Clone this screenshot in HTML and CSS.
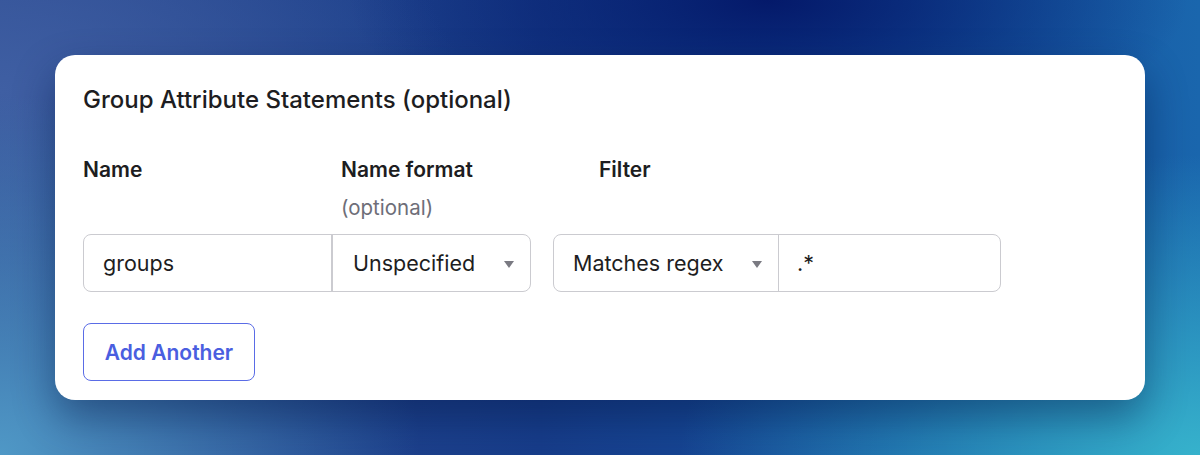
FILE: index.html
```html
<!DOCTYPE html>
<html>
<head>
	<title>Group Attribute Statements</title>
	<link rel="stylesheet" href="styles.css">
</head>
<body>
	<div class="stage">
		<div class="card">
			<h2 class="card-title">Group Attribute Statements (optional)</h2>

			<div class="labels">
				<div class="label label-name">Name</div>
				<div class="label label-format">
					Name format
					<span class="label-hint">(optional)</span>
				</div>
				<div class="label label-filter">Filter</div>
			</div>

			<div class="fields">
				<div class="field-group">
					<input type="text" class="text-input name-input" value="groups">
					<div class="select format-select">
						<span>Unspecified</span>
						<span class="caret"></span>
					</div>
				</div>
				<div class="field-group">
					<div class="select filter-select">
						<span>Matches regex</span>
						<span class="caret"></span>
					</div>
					<input type="text" class="text-input filter-input" value=".*">
				</div>
			</div>

			<button class="add-button">Add Another</button>
		</div>
	</div>
</body>
</html>
```

FILE: styles.css
```css
html, body {
	margin: 0;
	height: 100%;
}

body {
	font-family: Inter, "Noto Sans", sans-serif;
	overflow: hidden;
}

.stage {
	height: 455px;
	padding: 55px 55px 0 55px;
	box-sizing: border-box;
	background:
		radial-gradient(ellipse 420px 160px at 64% 0%, #04196a 0%, rgba(4, 25, 106, 0) 100%),
		radial-gradient(ellipse 520px 300px at 100% 100%, #36b2cc 0%, rgba(54, 178, 204, 0) 100%),
		radial-gradient(ellipse 420px 360px at 0% 100%, #4f98c6 0%, rgba(79, 152, 198, 0) 100%),
		radial-gradient(ellipse 460px 260px at 0% 20%, #3f5fa3 0%, rgba(63, 95, 163, 0) 100%),
		linear-gradient(90deg, #2d4a90 0%, #173d8a 45%, #14509e 75%, #1a66ad 100%);
}

.card {
	background: #fff;
	border-radius: 20px;
	height: 345px;
	box-sizing: border-box;
	padding: 30px 28px;
	box-shadow: 0 18px 40px rgba(5, 25, 70, 0.45);
}

.card-title {
	margin: 0;
	font-size: 24px;
	font-weight: 500;
	color: #1d1d21;
	line-height: 30px;
}

.labels {
	display: flex;
	margin-top: 40px;
	height: 79px;
}

.label {
	font-size: 21px;
	font-weight: 600;
	color: #1d1d21;
	line-height: 30px;
}

.label-name,
.label-format {
	width: 258px;
}

.label-hint {
	display: block;
	margin-top: 8px;
	font-weight: 400;
	color: #6e6e78;
	font-size: 20.5px;
}

.fields {
	display: flex;
	gap: 22px;
}

.field-group {
	display: flex;
	height: 58px;
	border: 1.5px solid #cbcbd0;
	border-radius: 8px;
	box-sizing: border-box;
}

.text-input {
	border: none;
	outline: none;
	background: transparent;
	font-family: inherit;
	font-size: 21.5px;
	color: #1d1d21;
	padding: 0 19px;
	box-sizing: border-box;
}

.name-input {
	width: 249px;
	border-right: 2px solid #cbcbd0;
}

.filter-input {
	width: 221px;
	padding-left: 18px;
}

.select {
	display: flex;
	align-items: center;
	justify-content: space-between;
	font-size: 21.5px;
	color: #1d1d21;
	padding: 0 16px 0 20px;
	box-sizing: border-box;
}

.format-select {
	width: 197px;
}

.filter-select {
	width: 225px;
	border-right: 1px solid #cbcbd0;
	padding-left: 19px;
}

.caret {
	width: 0;
	height: 0;
	border-left: 5px solid transparent;
	border-right: 5px solid transparent;
	border-top: 7px solid #7a7a82;
	margin-top: 2px;
}

.add-button {
	margin-top: 31px;
	width: 172px;
	height: 58px;
	background: #fff;
	border: 1.5px solid #5a6ce6;
	border-radius: 8px;
	font-family: inherit;
	font-size: 21px;
	font-weight: 600;
	color: #4a5ee0;
	cursor: pointer;
}
```
